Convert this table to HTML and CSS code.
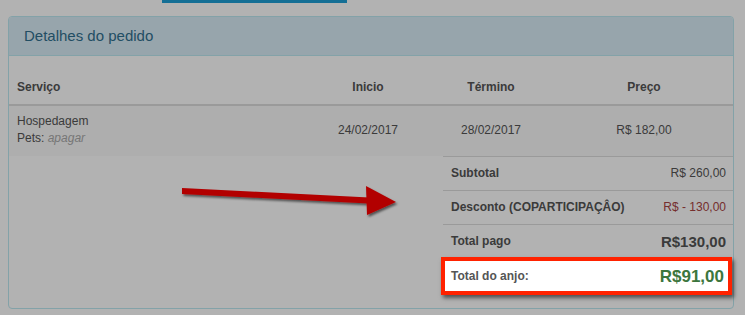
FILE: index.html
```html
<!DOCTYPE html>
<html lang="pt-BR">
<head>
<meta charset="utf-8">
<title>Detalhes do pedido</title>
<link rel="stylesheet" href="styles.css">
</head>
<body>
<div class="top-button"></div>
<div class="panel">
  <div class="panel-heading">Detalhes do pedido</div>
  <div class="panel-body">
    <div class="row row-head">
      <div class="cell c1">Serviço</div>
      <div class="cell c2">Inicio</div>
      <div class="cell c3">Término</div>
      <div class="cell c4">Preço</div>
    </div>
    <div class="row row-data">
      <div class="cell c1">Hospedagem<br>Pets: <em class="muted">apagar</em></div>
      <div class="cell c2">24/02/2017</div>
      <div class="cell c3">28/02/2017</div>
      <div class="cell c4">R$ 182,00</div>
    </div>
    <div class="summary">
      <div class="sum-row">
        <span class="label">Subtotal</span>
        <span class="value">R$ 260,00</span>
      </div>
      <div class="sum-row">
        <span class="label">Desconto (COPARTICIPAÇÂO)</span>
        <span class="value danger">R$ - 130,00</span>
      </div>
      <div class="sum-row">
        <span class="label">Total pago</span>
        <span class="value big">R$130,00</span>
      </div>
      <div class="sum-row highlight">
        <span class="label">Total do anjo:</span>
        <span class="value green">R$91,00</span>
      </div>
    </div>
  </div>
</div>
<svg class="arrow" width="745" height="315" viewBox="0 0 745 315" aria-hidden="true">
  <defs>
    <filter id="sh" x="-10%" y="-50%" width="130%" height="200%">
      <feDropShadow dx="1.5" dy="2" stdDeviation="1.2" flood-color="#000" flood-opacity="0.55"/>
    </filter>
  </defs>
  <g filter="url(#sh)" fill="#ff0000">
    <polygon points="182,188 369,197.5 369,203.5 182,194"/>
    <polygon points="366,186 396,202 367,215"/>
  </g>
</svg>
<div class="overlay"></div>
</body>
</html>
```

FILE: styles.css
```css
* { box-sizing: border-box; }
html, body { margin: 0; padding: 0; }
body {
  background: #fff;
  font-family: "Liberation Sans", Arial, sans-serif;
  font-size: 12px;
  line-height: 17px;
  color: #555;
  padding: 0 8px;
  width: 745px;
  height: 315px;
  overflow: hidden;
  position: relative;
}
.top-button {
  margin-left: 154px;
  width: 185px;
  height: 3px;
  background: #1f9fd6;
}
.panel {
  margin-top: 13px;
  width: 726px;
  border: 1px solid #bce8f1;
  border-radius: 4px;
  background: #fff;
}
.panel-heading {
  background: #d9edf7;
  color: #31708f;
  border-bottom: 1px solid #bce8f1;
  border-radius: 3px 3px 0 0;
  padding: 10px 15px;
  font-size: 15px;
  line-height: 18px;
}
.panel-body {
  padding-bottom: 13px;
}
.row {
  display: grid;
  grid-template-columns: 284px 150px 96px 1fr;
}
.cell { padding: 0 8px; }
.c2, .c3 { text-align: center; }
.c4 { text-align: center; padding-left: 24px; }
.row-head {
  font-weight: bold;
  border-bottom: 2px solid #ddd;
}
.row-head .cell { padding-top: 23px; padding-bottom: 8px; }
.row-data { background: #f9f9f9; }
.row-data .cell { padding-top: 7px; padding-bottom: 9px; }
.row-data .c2, .row-data .c3, .row-data .c4 { align-self: center; padding-top: 0; padding-bottom: 2px; }
.muted { color: #aaa; }
.summary {
  margin-left: 434px;
}
.sum-row {
  display: flex;
  justify-content: space-between;
  align-items: center;
  height: 34px;
  border-top: 1px solid #ddd;
  padding: 0 7px 0 8px;
}
.label { font-weight: bold; }
.danger { color: #a94442; }
.big { font-size: 15px; font-weight: bold; }
.highlight {
  position: relative;
  z-index: 20;
  margin: -1px 1px 0 -2px;
  height: 38px;
  background: #fff;
  border: 4px solid #ff2200;
  padding: 0 4px 0 6px;
  box-shadow: 2px 3px 4px rgba(0,0,0,0.55);
  color: #555;
}
.green { color: #3c763d; font-size: 17px; font-weight: bold; }
.arrow {
  position: absolute;
  left: 0;
  top: 0;
  z-index: 5;
  pointer-events: none;
}
.overlay {
  position: absolute;
  inset: 0;
  background: rgba(0,0,0,0.3);
  z-index: 10;
}
```
